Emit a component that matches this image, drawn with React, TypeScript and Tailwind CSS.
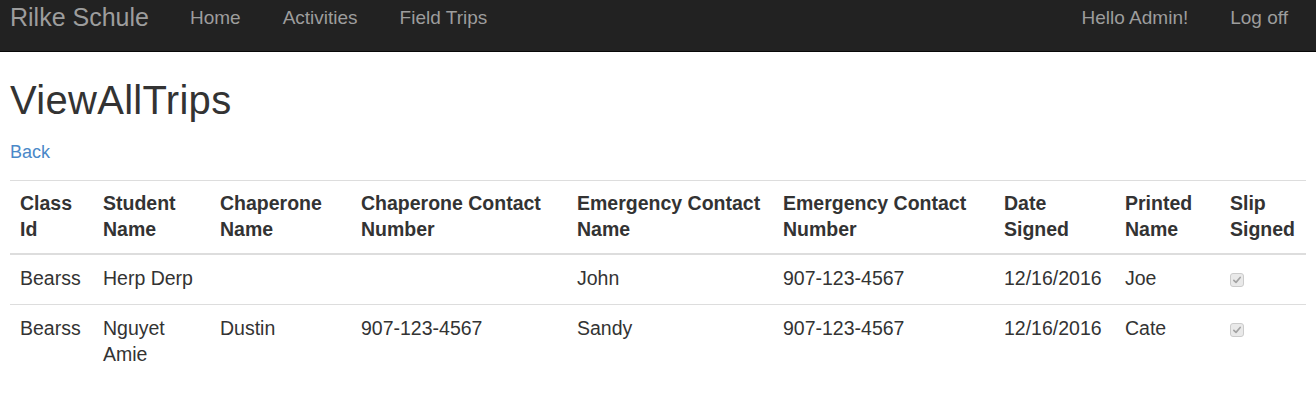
import React from 'react';

interface Trip {
  classId: string;
  student: string;
  chaperone: string;
  chaperoneNumber: string;
  emergencyName: string;
  emergencyNumber: string;
  dateSigned: string;
  printedName: string;
  slipSigned: boolean;
}

const trips: Trip[] = [
  {
    classId: 'Bearss',
    student: 'Herp Derp',
    chaperone: '',
    chaperoneNumber: '',
    emergencyName: 'John',
    emergencyNumber: '907-123-4567',
    dateSigned: '12/16/2016',
    printedName: 'Joe',
    slipSigned: true
  },
  {
    classId: 'Bearss',
    student: 'Nguyet Amie',
    chaperone: 'Dustin',
    chaperoneNumber: '907-123-4567',
    emergencyName: 'Sandy',
    emergencyNumber: '907-123-4567',
    dateSigned: '12/16/2016',
    printedName: 'Cate',
    slipSigned: true
  }
];

const columns = [
  { label: 'Class Id', width: 'w-[83px]' },
  { label: 'Student Name', width: 'w-[117px]' },
  { label: 'Chaperone Name', width: 'w-[141px]' },
  { label: 'Chaperone Contact Number', width: 'w-[216px]' },
  { label: 'Emergency Contact Name', width: 'w-[206px]' },
  { label: 'Emergency Contact Number', width: 'w-[221px]' },
  { label: 'Date Signed', width: 'w-[121px]' },
  { label: 'Printed Name', width: 'w-[105px]' },
  { label: 'Slip Signed', width: 'w-[86px]' }
];

function DisabledCheck({ checked }: { checked: boolean }) {
  return (
    <span className="mt-[4px] inline-flex h-[14px] w-[14px] items-center justify-center rounded-[3px] border border-[#cbcbcb] bg-[#e9e9e9]">
      {checked && (
        <svg viewBox="0 0 12 12" className="h-[10px] w-[10px]">
          <path d="M2.2 6.4 L4.8 8.8 L9.8 3" fill="none" stroke="#a3a3a3" strokeWidth="2" strokeLinecap="round" strokeLinejoin="round" />
        </svg>
      )}
    </span>
  );
}

function Navbar() {
  return (
    <nav className="flex h-[52px] items-start justify-between border-b border-[#080808] bg-[#222222] text-[#9d9d9d]">
      <div className="flex items-start">
        <a className="px-[10px] pt-[1px] text-[25px] leading-[32px]">Rilke Schule</a>
        <ul className="ml-[10px] flex text-[19px] leading-[26px]">
          <li className="px-[21px] pt-[5px]">Home</li>
          <li className="px-[21px] pt-[5px]">Activities</li>
          <li className="px-[21px] pt-[5px]">Field Trips</li>
        </ul>
      </div>
      <ul className="mr-[7px] flex text-[19px] leading-[26px]">
        <li className="px-[21px] pt-[5px]">Hello Admin!</li>
        <li className="px-[21px] pt-[5px]">Log off</li>
      </ul>
    </nav>
  );
}

export default function App() {
  return (
    <div className="min-h-[411px] bg-white font-['Liberation_Sans',Arial,sans-serif] text-[#333333]">
      <Navbar />
      <div className="px-[10px]">
        <h2 className="mt-[26px] text-[40px] leading-[44px] tracking-[0.3px]">ViewAllTrips</h2>
        <p className="mt-[17px] text-[18px] leading-[26px]">
          <a className="text-[#4a88c8]">Back</a>
        </p>
        <table className="mt-[15px] w-full table-fixed border-collapse text-[19.5px] leading-[26px]">
          <thead>
            <tr className="border-t border-[#dddddd]">
              {columns.map((col) => (
                <th
                  key={col.label}
                  className={`${col.width} border-b-2 border-[#dddddd] px-[10px] pt-[9px] pb-[11px] text-left align-bottom font-bold`}
                >
                  {col.label}
                </th>
              ))}
            </tr>
          </thead>
          <tbody>
            {trips.map((trip, index) => (
              <tr key={index} className={index > 0 ? 'border-t border-[#dddddd]' : ''}>
                <td className="px-[10px] pt-[10px] pb-[13px] align-top">{trip.classId}</td>
                <td className="px-[10px] pt-[10px] pb-[13px] align-top">{trip.student}</td>
                <td className="px-[10px] pt-[10px] pb-[13px] align-top">{trip.chaperone}</td>
                <td className="px-[10px] pt-[10px] pb-[13px] align-top">{trip.chaperoneNumber}</td>
                <td className="px-[10px] pt-[10px] pb-[13px] align-top">{trip.emergencyName}</td>
                <td className="px-[10px] pt-[10px] pb-[13px] align-top">{trip.emergencyNumber}</td>
                <td className="px-[10px] pt-[10px] pb-[13px] align-top">{trip.dateSigned}</td>
                <td className="px-[10px] pt-[10px] pb-[13px] align-top">{trip.printedName}</td>
                <td className="px-[10px] pt-[10px] pb-[13px] align-top">
                  <DisabledCheck checked={trip.slipSigned} />
                </td>
              </tr>
            ))}
          </tbody>
        </table>
      </div>
    </div>
  );
}
